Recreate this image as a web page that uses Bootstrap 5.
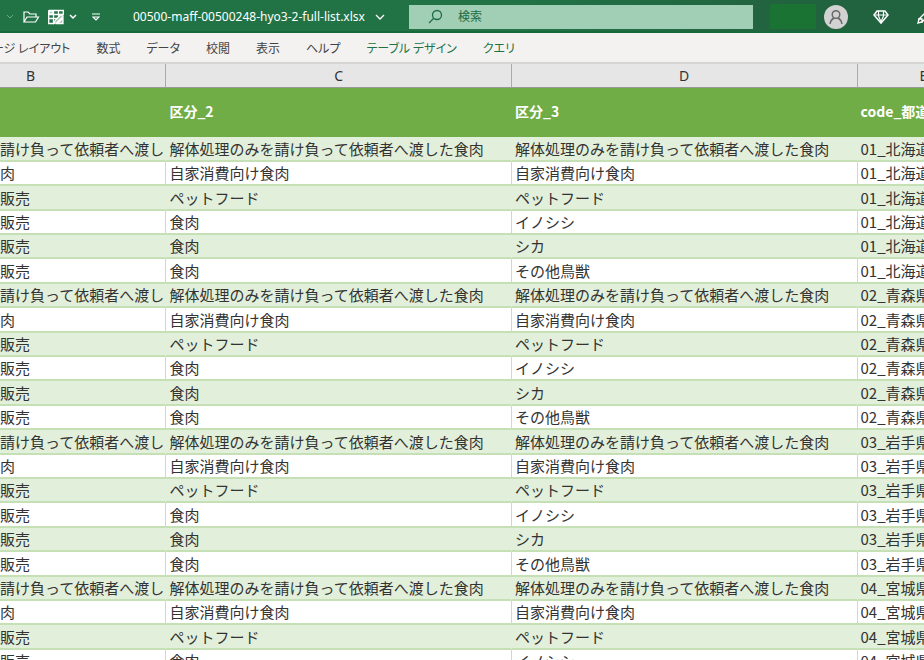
<!DOCTYPE html>
<html lang="ja">
<head>
<meta charset="utf-8">
<meta name="viewport" content="width=device-width, initial-scale=1">
<title>00500-maff-00500248-hyo3-2-full-list.xlsx</title>
<link href="https://cdn.jsdelivr.net/npm/bootstrap@5.3.0/dist/css/bootstrap.min.css" rel="stylesheet">
<style>
  body { font-family: "Noto Sans CJK JP", sans-serif; font-size: 15px; color: #333; }
  .titlebar { height: 33px; background: linear-gradient(90deg, #217346 55%, #22633f 85%); border-bottom: 2px solid #17683a; font: 12px/16px "Noto Sans", "Noto Sans CJK JP", sans-serif; padding-top: 2px; }
  .titlebar svg { display: block; fill: none; stroke: currentColor; flex: none; }
  .quick { width: 409px; }
  .quick .file-name { margin-left: 33px; }
  .quick .chev { margin-left: 10px; }
  .quick .more { margin-left: 15px; }
  .finder { height: 24px; background: #a0cfb5; color: #1f6b43; padding-left: 19px; gap: 15px; }
  .finder input { font-size: 12px; color: #1f6b43; outline: 0; }
  .finder input::placeholder { color: #1f6b43; opacity: 1; }
  .account { width: 171px; padding-left: 17px; }
  .account-name { width: 46px; height: 25px; background: #1a7233; }
  .avatar { width: 24px; height: 24px; background: #d2d2d2; color: #666; margin-left: 8px; }
  .gem { margin-left: 25px; }
  .pen { margin-left: 28px; }
  .ribbon { height: 31px; gap: 26px; background: #f3f2f1; border-bottom: 2px solid #d4d4d4; font-size: 12px; line-height: 30px; font-feature-settings: "palt"; }
  .ribbon a { color: #444; }
  .ribbon a:first-child { margin-left: -8px; }
  .ribbon a.tool { color: #217346; }
  .grid-table { table-layout: fixed; border-collapse: separate; border-spacing: 0; line-height: 20px; }
  .grid-table th, .grid-table td { overflow: hidden; white-space: nowrap; padding: 0 0 0 3px; vertical-align: middle; }
  .grid-table th:first-child, .grid-table td:first-child { padding-left: 0; }
  .col-b { width: 17.9%; } .col-c, .col-d { width: 37.4%; }
  .letters th { height: 24px; background: #e6e6e6; border-bottom: 1px solid #999; border-left: 1px solid #ababab; font: 14px/20px "Noto Sans", sans-serif; text-align: center; }
  .grid-table .letters th { padding-left: 0; }
  .grid-table .letters th:first-child { border-left: 0; text-align: left; padding-left: 26px; }
  .grid-table .letters th:last-child { text-align: left; padding-left: 62px; }
  .grid-table .fields th { height: 49px; background: #70ad47; color: #fff; font-weight: 700; font-size: 14px; border-left: 1px solid #70ad47; padding-bottom: 4px; }
  .records td { height: 24px; border-left: 1px solid #d4d4d4; border-bottom: 2px solid #c6e0b6; }
  .records tr:nth-child(5n+1) td, .records tr:nth-child(5n+3) td { height: 25px; }
  .records tr:nth-child(odd) td { background: #e2efda; border-left-color: #e2efda; }
  .records td:first-child { border-left: 0; }
</style>
<script src="https://cdn.jsdelivr.net/npm/bootstrap@5.3.0/dist/js/bootstrap.bundle.min.js"></script>
</head>
<body class="vh-100 overflow-hidden d-flex flex-column">
<header class="titlebar d-flex align-items-center text-white flex-shrink-0 overflow-hidden">
  <div class="quick d-flex align-items-center flex-shrink-0">
    <svg width="23" height="16" viewBox="0 0 23 16" opacity=".35"><path d="M7 6l3 3 3-3"/></svg>
    <button class="btn p-0 border-0 text-white" aria-label="開く"><svg width="17" height="16" viewBox="0 0 17 16" stroke-width="1.200"><path d="M1 13V3h4l2 2h6v3M1 13l3-5h11.500l-3 5z"/></svg></button>
    <button class="btn p-0 border-0 text-white ms-2" aria-label="テーブル"><svg width="17" height="16" viewBox="0 0 17 16" stroke-width="1.300"><path d="M.7 1.500h14.600v5M.7 1.500v13h5M.7 5.500h14.600M.7 9.500h9M5.500 1.500v13M10.500 1.500v6"/><path d="M6 14.500l1-3 6-6 2 2-6 6zM9 14.500l6-5v5zM1 2h4v3H1z" fill="#fff" fill-opacity=".6"/></svg></button>
    <svg class="ms-1" width="8" height="16" viewBox="0 0 8 16" stroke-width="1.500"><path d="M1 6l3 3 3-3"/></svg>
    <button class="btn p-0 border-0 text-white more" aria-label="その他"><svg width="8" height="16" viewBox="0 0 8 16" stroke-width="1.200"><path d="M0 5h8M1 8l3 3 3-3z"/></svg></button>
    <span class="file-name text-nowrap">00500-maff-00500248-hyo3-2-full-list.xlsx</span>
    <svg class="chev" width="10" height="16" viewBox="0 0 10 16" stroke-width="1.300"><path d="M1 6l4 4 4-4"/></svg>
  </div>
  <label class="finder d-flex align-items-center flex-grow-1">
    <svg width="15" height="16" viewBox="0 0 15 16" stroke-width="1.300"><circle cx="9" cy="6" r="4.500"/><path d="M6 9l-5 5"/></svg>
    <input class="border-0 bg-transparent p-0 w-100" type="text" placeholder="検索" aria-label="検索">
  </label>
  <div class="account d-flex align-items-center flex-shrink-0 overflow-hidden">
    <span class="account-name flex-shrink-0"></span>
    <button class="avatar btn rounded-circle border-0 p-0 flex-shrink-0 d-flex align-items-center justify-content-center" aria-label="アカウント"><svg width="16" height="16" viewBox="0 0 16 16" stroke-width="1.400"><circle cx="8" cy="5.500" r="3.800"/><path d="M2 15c.5-3 2-5 4-6M14 15c-.5-3-2-5-4-6"/></svg></button>
    <button class="gem btn p-0 border-0 text-white" aria-label="プレミアム"><svg width="16" height="16" viewBox="0 0 16 16" stroke-width="1.200"><path d="M4 2h8l3 4-7 8-7-8z" stroke-width="1.500"/><path d="M1 6h14M5.500 2v5L8 13l2.500-6V2"/></svg></button>
    <button class="pen btn p-0 border-0 text-white" aria-label="ペン"><svg width="16" height="16" viewBox="0 0 16 16" stroke-width="1.300"><path d="M1 14l1-4 8-8 3 3-8 8zM1 10h4v4"/></svg></button>
  </div>
</header>
<nav class="ribbon d-flex flex-shrink-0 text-nowrap overflow-hidden" aria-label="リボン">
  <a class="text-decoration-none" href="#">ージ レイアウト</a>
  <a class="text-decoration-none" href="#">数式</a>
  <a class="text-decoration-none" href="#">データ</a>
  <a class="text-decoration-none" href="#">校閲</a>
  <a class="text-decoration-none" href="#">表示</a>
  <a class="text-decoration-none" href="#">ヘルプ</a>
  <a class="text-decoration-none tool" href="#">テーブル デザイン</a>
  <a class="text-decoration-none tool" href="#">クエリ</a>
</nav>
<main class="flex-fill overflow-hidden">
<table class="grid-table w-100">
  <colgroup><col class="col-b"><col class="col-c"><col class="col-d"><col></colgroup>
  <thead>
    <tr class="letters"><th>B</th><th>C</th><th>D</th><th>E</th></tr>
    <tr class="fields"><th></th><th>区分_2</th><th>区分_3</th><th>code_都道府県</th></tr>
  </thead>
  <tbody class="records">
    <tr><td>請け負って依頼者へ渡し</td><td>解体処理のみを請け負って依頼者へ渡した食肉</td><td>解体処理のみを請け負って依頼者へ渡した食肉</td><td>01_北海道</td></tr>
    <tr><td>肉</td><td>自家消費向け食肉</td><td>自家消費向け食肉</td><td>01_北海道</td></tr>
    <tr><td>販売</td><td>ペットフード</td><td>ペットフード</td><td>01_北海道</td></tr>
    <tr><td>販売</td><td>食肉</td><td>イノシシ</td><td>01_北海道</td></tr>
    <tr><td>販売</td><td>食肉</td><td>シカ</td><td>01_北海道</td></tr>
    <tr><td>販売</td><td>食肉</td><td>その他鳥獣</td><td>01_北海道</td></tr>
    <tr><td>請け負って依頼者へ渡し</td><td>解体処理のみを請け負って依頼者へ渡した食肉</td><td>解体処理のみを請け負って依頼者へ渡した食肉</td><td>02_青森県</td></tr>
    <tr><td>肉</td><td>自家消費向け食肉</td><td>自家消費向け食肉</td><td>02_青森県</td></tr>
    <tr><td>販売</td><td>ペットフード</td><td>ペットフード</td><td>02_青森県</td></tr>
    <tr><td>販売</td><td>食肉</td><td>イノシシ</td><td>02_青森県</td></tr>
    <tr><td>販売</td><td>食肉</td><td>シカ</td><td>02_青森県</td></tr>
    <tr><td>販売</td><td>食肉</td><td>その他鳥獣</td><td>02_青森県</td></tr>
    <tr><td>請け負って依頼者へ渡し</td><td>解体処理のみを請け負って依頼者へ渡した食肉</td><td>解体処理のみを請け負って依頼者へ渡した食肉</td><td>03_岩手県</td></tr>
    <tr><td>肉</td><td>自家消費向け食肉</td><td>自家消費向け食肉</td><td>03_岩手県</td></tr>
    <tr><td>販売</td><td>ペットフード</td><td>ペットフード</td><td>03_岩手県</td></tr>
    <tr><td>販売</td><td>食肉</td><td>イノシシ</td><td>03_岩手県</td></tr>
    <tr><td>販売</td><td>食肉</td><td>シカ</td><td>03_岩手県</td></tr>
    <tr><td>販売</td><td>食肉</td><td>その他鳥獣</td><td>03_岩手県</td></tr>
    <tr><td>請け負って依頼者へ渡し</td><td>解体処理のみを請け負って依頼者へ渡した食肉</td><td>解体処理のみを請け負って依頼者へ渡した食肉</td><td>04_宮城県</td></tr>
    <tr><td>肉</td><td>自家消費向け食肉</td><td>自家消費向け食肉</td><td>04_宮城県</td></tr>
    <tr><td>販売</td><td>ペットフード</td><td>ペットフード</td><td>04_宮城県</td></tr>
    <tr><td>販売</td><td>食肉</td><td>イノシシ</td><td>04_宮城県</td></tr>
  </tbody>
</table>
</main>
</body>
</html>
